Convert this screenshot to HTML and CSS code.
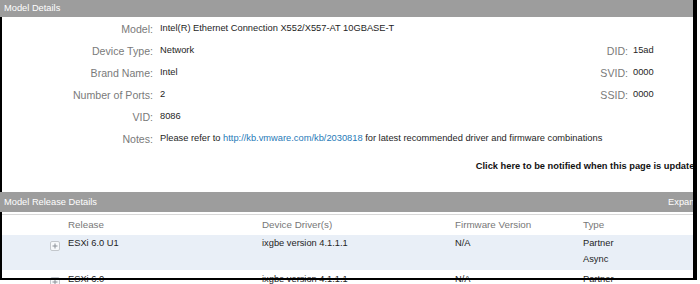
FILE: index.html
```html
<!DOCTYPE html>
<html lang="en">
  <head>
    <meta charset="UTF-8" />
    <title>Model Details</title>
    <link rel="stylesheet" href="styles.css">
  </head>
  <body>
    <div class="page">
      <div class="frame"></div>

      <div class="bar bar-details">
        <div class="bar-inner"><span>Model Details</span></div>
      </div>

      <div class="details">
        <div class="label">Model:</div>
        <div class="value">Intel(R) Ethernet Connection X552/X557-AT 10GBASE-T</div>
        <div></div>
        <div></div>

        <div class="label">Device Type:</div>
        <div class="value">Network</div>
        <div class="label">DID:</div>
        <div class="value value-right">15ad</div>

        <div class="label">Brand Name:</div>
        <div class="value">Intel</div>
        <div class="label">SVID:</div>
        <div class="value value-right">0000</div>

        <div class="label">Number of Ports:</div>
        <div class="value">2</div>
        <div class="label">SSID:</div>
        <div class="value value-right">0000</div>

        <div class="label">VID:</div>
        <div class="value">8086</div>
        <div></div>
        <div></div>

        <div class="label">Notes:</div>
        <div class="value notes">Please refer to <a href="#">http://kb.vmware.com/kb/2030818</a> for latest recommended driver and firmware combinations</div>
      </div>

      <div class="notify">Click here to be notified when this page is updated</div>

      <div class="bar bar-release">
        <div class="bar-inner bar-wide"><span>Model Release Details</span><span>Expand All</span></div>
      </div>
      <div class="rule"></div>

      <div class="releases">
        <div class="rel-row rel-head">
          <div></div>
          <div>Release</div>
          <div>Device Driver(s)</div>
          <div>Firmware Version</div>
          <div>Type</div>
        </div>

        <div class="rel-row rel-item alt">
          <div class="toggle-cell">
            <svg class="toggle" width="10" height="10" viewBox="0 0 10 10">
              <rect x="0.5" y="0.5" width="9" height="9" rx="1.5" fill="#f7f9fb" stroke="#c3c7cc"/>
              <path d="M2.5 5h5M5 2.5v5" stroke="#8a9097" stroke-width="1"/>
            </svg>
          </div>
          <div>ESXi 6.0 U1</div>
          <div>ixgbe version 4.1.1.1</div>
          <div>N/A</div>
          <div>Partner<br>Async</div>
        </div>

        <div class="rel-row rel-item">
          <div class="toggle-cell">
            <svg class="toggle" width="10" height="10" viewBox="0 0 10 10">
              <rect x="0.5" y="0.5" width="9" height="9" rx="1.5" fill="#f7f9fb" stroke="#c3c7cc"/>
              <path d="M2.5 5h5M5 2.5v5" stroke="#8a9097" stroke-width="1"/>
            </svg>
          </div>
          <div>ESXi 6.0</div>
          <div>ixgbe version 4.1.1.1</div>
          <div>N/A</div>
          <div>Partner<br>Async</div>
        </div>
      </div>
    </div>
  </body>
</html>
```

FILE: styles.css
```css
body {
  margin: 0;
  padding: 0;
  background-color: #ffffff;
  font-family: "Liberation Sans", Arial, sans-serif;
}

.page {
  position: relative;
  width: 697px;
  overflow: hidden;
}

/* black window frame drawn over the content */
.frame {
  position: absolute;
  top: 0;
  left: 0;
  width: 697px;
  height: 280px;
  box-sizing: border-box;
  border-left: 2px solid #000;
  border-right: 4px solid #000;
  border-bottom: 2px solid #000;
  z-index: 1;
  pointer-events: none;
}

.bar {
  position: relative;
  z-index: 2;
  width: 693px;
  overflow: hidden;
  background-color: #9d9d9d;
  color: #ffffff;
  font-size: 9.3px;
}

.bar-inner {
  display: flex;
  justify-content: space-between;
  width: 712px;
  box-sizing: border-box;
  padding: 0 5px 0 4px;
}

.bar-wide {
  width: 717px;
}

.bar-details {
  height: 17px;
  line-height: 17px;
}

.bar-release {
  height: 20px;
  line-height: 20px;
  margin-top: 17px;
}

.details {
  display: grid;
  grid-template-columns: 153px 1fr 100px 65px;
  grid-auto-rows: 22px;
  width: 693px;
  margin-top: 1px;
}

.label {
  text-align: right;
  color: #7a7a7a;
  font-size: 10.6px;
  line-height: 22px;
  white-space: nowrap;
}

.value {
  color: #1e1e1e;
  font-size: 9.3px;
  line-height: 20px;
  padding-left: 7px;
  white-space: nowrap;
}

.value-right {
  padding-left: 5px;
}

.notes {
  grid-column: 2 / -1;
}

.notes a {
  color: #1f7ab8;
  text-decoration: none;
}

.notify {
  margin: 7px -3px 0 0;
  text-align: right;
  color: #111111;
  font-weight: bold;
  font-size: 9.3px;
  line-height: 18px;
  white-space: nowrap;
}

.rule {
  height: 1px;
  width: 693px;
  margin-top: 2px;
  background-color: #d8d8d8;
}

.rel-row {
  display: grid;
  grid-template-columns: 68px 194px 193px 128px 1fr;
  width: 693px;
  font-size: 9.3px;
  white-space: nowrap;
}

.rel-head {
  color: #777777;
  font-size: 9.8px;
  line-height: 20px;
}

.rel-item {
  color: #1e1e1e;
  line-height: 16px;
  padding-bottom: 3px;
}

.rel-item.alt {
  background-color: #e9eff7;
  border-bottom: 1px solid #ffffff;
}

.toggle-cell {
  display: flex;
  justify-content: flex-end;
  align-items: flex-start;
  padding: 6px 8px 0 0;
}

.toggle {
  display: block;
}
```
